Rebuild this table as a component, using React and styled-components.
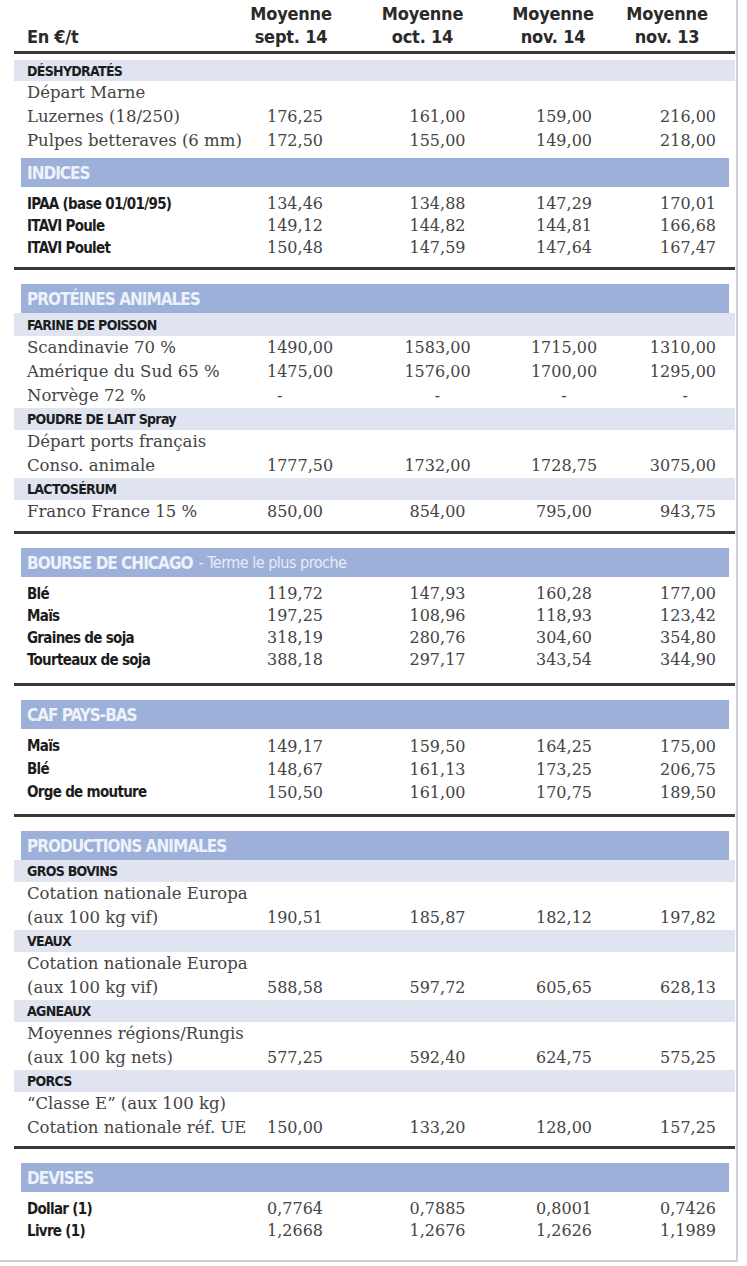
import React from "react";
import styled, { createGlobalStyle } from "styled-components";

const Global = createGlobalStyle`
  html, body { margin: 0; padding: 0; background: #ffffff; }
  #root { width: 747px; }
`;

const CONDENSED = `"Liberation Sans Narrow", "DejaVu Sans Condensed", "Roboto Condensed", sans-serif`;
const SERIF = `"DejaVu Serif", "Liberation Serif", serif`;

const Frame = styled.div`
  box-sizing: border-box;
  width: 738px;
  padding: 0 1px 18px 14px;
  border-right: 2px solid #cbd2de;
  border-bottom: 2px solid #cbd2de;
  background: #ffffff;
`;

const HeaderGrid = styled.div`
  display: grid;
  grid-template-columns: 211px 132px 131px 130px 98px 19px;
  height: 51px;
  align-items: end;
`;

const HeaderLabel = styled.div`
  padding-left: 13px;
  padding-bottom: 3px;
  font-family: ${CONDENSED};
  font-weight: 700;
  font-size: 18px;
  line-height: 23px;
  letter-spacing: -0.3px;
  color: #2a2a2a;
`;

const HeaderCell = styled.div`
  text-align: center;
  padding-bottom: 3px;
  font-family: ${CONDENSED};
  font-weight: 700;
  font-size: 18px;
  line-height: 23px;
  letter-spacing: -0.2px;
  color: #2a2a2a;
`;

const Rule = styled.div`
  height: 3px;
  background: #383838;
`;

const Block = styled.div`
  padding-bottom: ${(p) => p.$pb}px;
`;

const Band = styled.div`
  margin: ${(p) => p.$mt}px 6px 0 7px;
  height: 29px;
  background: #9cb0d9;
  display: flex;
  align-items: center;
  padding-left: 6px;
  gap: 6px;
  white-space: nowrap;
`;

const BandTitle = styled.span`
  font-family: ${CONDENSED};
  font-weight: 700;
  font-size: 17px;
  letter-spacing: -1px;
  color: #eef2fa;
  text-transform: uppercase;
`;

const BandNote = styled.span`
  font-family: ${CONDENSED};
  font-weight: 400;
  font-size: 16px;
  letter-spacing: -0.5px;
  color: #e6ecf7;
`;

const SubBand = styled.div`
  margin-top: ${(p) => p.$mt || 0}px;
  height: ${(p) => p.$h}px;
  background: #dfe4f0;
  display: flex;
  align-items: center;
  padding-left: 13px;
  font-family: ${CONDENSED};
  font-weight: 700;
  font-size: 14px;
  letter-spacing: -0.7px;
  color: #1c1c1c;
  white-space: nowrap;
`;

const Rows = styled.div`
  padding-top: ${(p) => p.$pt || 0}px;
`;

const Row = styled.div`
  display: grid;
  grid-template-columns: 253px 108px 125px 128px 88px 19px;
  height: ${(p) => p.$h}px;
  align-items: center;
  line-height: ${(p) => p.$h}px;
`;

const Label = styled.div`
  padding-left: 13px;
  white-space: nowrap;
  font-family: ${(p) => (p.$bold ? CONDENSED : SERIF)};
  font-weight: ${(p) => (p.$bold ? 700 : 400)};
  font-size: ${(p) => (p.$bold ? 15 : 16.5)}px;
  letter-spacing: ${(p) => (p.$bold ? "-0.7px" : "0")};
  color: ${(p) => (p.$bold ? "#1c1c1c" : "#444444")};
`;

const Value = styled.div`
  font-family: ${SERIF};
  font-size: 16px;
  color: #444444;
  white-space: nowrap;
  text-align: ${(p) => p.$align};
  padding-left: ${(p) => p.$pl || 0}px;
  padding-right: ${(p) => p.$pr || 0}px;
`;

const ALIGN = ["left", "center", "center", "right"];
const DASH_PAD = [{ pl: 10 }, {}, {}, { pr: 28 }];

const blocks = [
  {
    pb: 8,
    items: [
      { t: "sub", label: "DÉSHYDRATÉS", mt: 6, h: 21 },
      { t: "rows", h: 24, rows: [
        ["Départ Marne"],
        ["Luzernes (18/250)", "176,25", "161,00", "159,00", "216,00"],
        ["Pulpes betteraves (6 mm)", "172,50", "155,00", "149,00", "218,00"],
      ] },
      { t: "band", label: "INDICES", mt: 5 },
      { t: "rows", h: 22, pt: 6, bold: true, rows: [
        ["IPAA (base 01/01/95)", "134,46", "134,88", "147,29", "170,01"],
        ["ITAVI Poule", "149,12", "144,82", "144,81", "166,68"],
        ["ITAVI Poulet", "150,48", "147,59", "147,64", "167,47"],
      ] },
    ],
  },
  {
    pb: 7,
    items: [
      { t: "band", label: "PROTÉINES ANIMALES", mt: 14 },
      { t: "sub", label: "FARINE DE POISSON", h: 23 },
      { t: "rows", h: 24, rows: [
        ["Scandinavie 70 %", "1490,00", "1583,00", "1715,00", "1310,00"],
        ["Amérique du Sud 65 %", "1475,00", "1576,00", "1700,00", "1295,00"],
        ["Norvège 72 %", "-", "-", "-", "-"],
      ] },
      { t: "sub", label: "POUDRE DE LAIT Spray", h: 22 },
      { t: "rows", h: 24, rows: [
        ["Départ ports français"],
        ["Conso. animale", "1777,50", "1732,00", "1728,75", "3075,00"],
      ] },
      { t: "sub", label: "LACTOSÉRUM", h: 22 },
      { t: "rows", h: 24, rows: [
        ["Franco France 15 %", "850,00", "854,00", "795,00", "943,75"],
      ] },
    ],
  },
  {
    pb: 12,
    items: [
      { t: "band", label: "BOURSE DE CHICAGO", note: "- Terme le plus proche", mt: 14 },
      { t: "rows", h: 22, pt: 6, bold: true, rows: [
        ["Blé", "119,72", "147,93", "160,28", "177,00"],
        ["Maïs", "197,25", "108,96", "118,93", "123,42"],
        ["Graines de soja", "318,19", "280,76", "304,60", "354,80"],
        ["Tourteaux de soja", "388,18", "297,17", "343,54", "344,90"],
      ] },
    ],
  },
  {
    pb: 10,
    items: [
      { t: "band", label: "CAF PAYS-BAS", mt: 14 },
      { t: "rows", h: 23, pt: 6, bold: true, rows: [
        ["Maïs", "149,17", "159,50", "164,25", "175,00"],
        ["Blé", "148,67", "161,13", "173,25", "206,75"],
        ["Orge de mouture", "150,50", "161,00", "170,75", "189,50"],
      ] },
    ],
  },
  {
    pb: 6,
    items: [
      { t: "band", label: "PRODUCTIONS ANIMALES", mt: 14 },
      { t: "sub", label: "GROS BOVINS", h: 22 },
      { t: "rows", h: 24, rows: [
        ["Cotation nationale Europa"],
        ["(aux 100 kg vif)", "190,51", "185,87", "182,12", "197,82"],
      ] },
      { t: "sub", label: "VEAUX", h: 22 },
      { t: "rows", h: 24, rows: [
        ["Cotation nationale Europa"],
        ["(aux 100 kg vif)", "588,58", "597,72", "605,65", "628,13"],
      ] },
      { t: "sub", label: "AGNEAUX", h: 22 },
      { t: "rows", h: 24, rows: [
        ["Moyennes régions/Rungis"],
        ["(aux 100 kg nets)", "577,25", "592,40", "624,75", "575,25"],
      ] },
      { t: "sub", label: "PORCS", h: 22 },
      { t: "rows", h: 24, rows: [
        ["\u201CClasse E\u201D (aux 100 kg)"],
        ["Cotation nationale réf. UE", "150,00", "133,20", "128,00", "157,25"],
      ] },
    ],
  },
  {
    pb: 0,
    items: [
      { t: "band", label: "DEVISES", mt: 14 },
      { t: "rows", h: 22, pt: 6, bold: true, rows: [
        ["Dollar (1)", "0,7764", "0,7885", "0,8001", "0,7426"],
        ["Livre (1)", "1,2668", "1,2676", "1,2626", "1,1989"],
      ] },
    ],
  },
];

function Item({ item }) {
  if (item.t === "sub") {
    return <SubBand $mt={item.mt} $h={item.h}>{item.label}</SubBand>;
  }
  if (item.t === "band") {
    return (
      <Band $mt={item.mt}>
        <BandTitle>{item.label}</BandTitle>
        {item.note && <BandNote>{item.note}</BandNote>}
      </Band>
    );
  }
  return (
    <Rows $pt={item.pt}>
      {item.rows.map((r, i) => (
        <Row key={i} $h={item.h}>
          <Label $bold={item.bold}>{r[0]}</Label>
          {r.slice(1).map((v, j) => {
            const pad = v === "-" ? DASH_PAD[j] : {};
            return (
              <Value key={j} $align={ALIGN[j]} $pl={pad.pl} $pr={pad.pr}>
                {v}
              </Value>
            );
          })}
        </Row>
      ))}
    </Rows>
  );
}

export default function App() {
  return (
    <>
      <Global />
      <Frame>
        <HeaderGrid>
          <HeaderLabel>En €/t</HeaderLabel>
          <HeaderCell>Moyenne<br />sept. 14</HeaderCell>
          <HeaderCell>Moyenne<br />oct. 14</HeaderCell>
          <HeaderCell>Moyenne<br />nov. 14</HeaderCell>
          <HeaderCell>Moyenne<br />nov. 13</HeaderCell>
        </HeaderGrid>
        {blocks.map((b, bi) => (
          <React.Fragment key={bi}>
            <Rule />
            <Block $pb={b.pb}>
              {b.items.map((it, ii) => (
                <Item key={ii} item={it} />
              ))}
            </Block>
          </React.Fragment>
        ))}
      </Frame>
    </>
  );
}
